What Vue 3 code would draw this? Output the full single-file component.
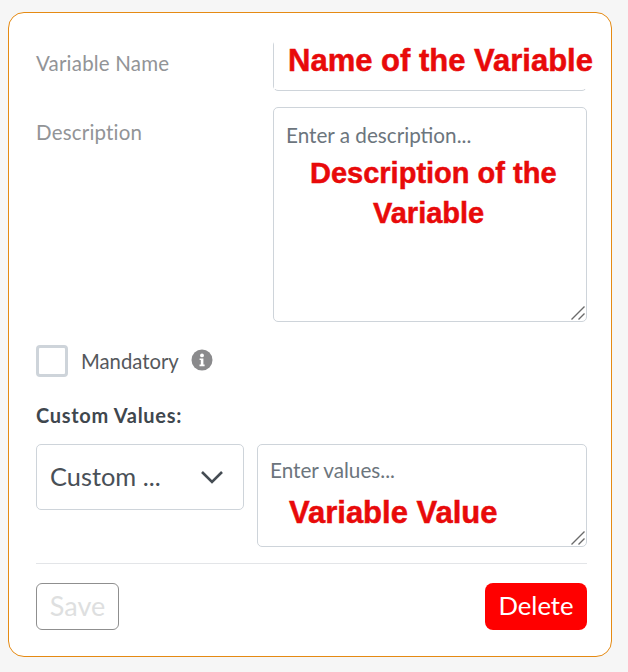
<script setup>
const nameNote = 'Name of the Variable'
const valueNote = 'Variable Value'
</script>

<template>
  <div class="card">
    <div class="row name-row">
      <label class="label name-label">Variable Name</label>
      <div class="field">
        <input class="input" type="text" />
        <div class="mask"></div>
        <div class="note name-note">{{ nameNote }}</div>
      </div>
    </div>

    <div class="row desc-row">
      <label class="label">Description</label>
      <div class="field">
        <textarea class="area desc-area" placeholder="Enter a description..."></textarea>
        <svg class="grip" width="14" height="14" viewBox="0 0 14 14">
          <path d="M0.5 13.5L13.5 0.5M7.5 13.5L13.5 7.5" stroke="#6b6b6b" stroke-width="1.4" fill="none" />
        </svg>
        <div class="note desc-note">
          <div>Description of the</div>
          <div class="desc-second">Variable</div>
        </div>
      </div>
    </div>

    <div class="check-row">
      <span class="checkbox"></span>
      <span class="check-label">Mandatory</span>
      <svg class="info" width="22" height="22" viewBox="0 0 22 22">
        <circle cx="11" cy="11" r="10.5" fill="#8a8a8c" />
        <circle cx="11" cy="6.4" r="1.9" fill="#fff" />
        <path d="M8.6 9.4h3.8v6.2h1.2v1.7H8.5v-1.7h1.3v-4.5H8.6z" fill="#fff" />
      </svg>
    </div>

    <div class="section-title">Custom Values:</div>

    <div class="values-row">
      <div class="select">
        <span>Custom ...</span>
        <svg width="24" height="14" viewBox="0 0 24 14">
          <path d="M2 2l10 10L22 2" fill="none" stroke="#454c53" stroke-width="2.6" />
        </svg>
      </div>
      <div class="field values-field">
        <textarea class="area values-area" placeholder="Enter values..."></textarea>
        <svg class="grip" width="14" height="14" viewBox="0 0 14 14">
          <path d="M0.5 13.5L13.5 0.5M7.5 13.5L13.5 7.5" stroke="#6b6b6b" stroke-width="1.4" fill="none" />
        </svg>
        <div class="note value-note">{{ valueNote }}</div>
      </div>
    </div>

    <div class="footer">
      <button class="btn-save" disabled>Save</button>
      <button class="btn-delete">Delete</button>
    </div>
  </div>
</template>

<style>
html, body {
  background: #f6f6f6;
}
</style>

<style scoped>
.card {
  box-sizing: border-box;
  width: 604px;
  height: 645px;
  margin: 12px 0 0 8px;
  padding: 27px 24px 0 27px;
  background: #fff;
  border: 1px solid #e58a13;
  border-radius: 16px;
  font-family: Lato, "Open Sans", sans-serif;
}

.row {
  display: grid;
  grid-template-columns: 237px 314px;
}

.name-row {
  height: 51px;
  margin-bottom: 16px;
}

.desc-row {
  height: 215px;
  margin-bottom: 23px;
}

.label {
  font-size: 20.5px;
  letter-spacing: 0.2px;
  line-height: 24px;
  color: #929497;
}

.name-label {
  padding-top: 11px;
}

.desc-row .label {
  padding-top: 13px;
}

.field {
  position: relative;
}

.input,
.area {
  box-sizing: border-box;
  display: block;
  width: 100%;
  height: 100%;
  margin: 0;
  padding: 0 12px;
  background: #fff;
  border: 1px solid #ced4da;
  border-radius: 5px;
  outline: none;
  resize: none;
  font-family: inherit;
  font-size: 20.7px;
}

.area {
  line-height: 24px;
}

.desc-area {
  padding-top: 15px;
}

.values-area {
  padding-top: 13px;
}

.area::placeholder {
  color: #6c757d;
  opacity: 1;
}

.mask {
  position: absolute;
  left: 1px;
  right: -3px;
  top: -2px;
  bottom: 2px;
  background: #fff;
}

.grip {
  position: absolute;
  right: 2px;
  bottom: 2px;
}

.note {
  position: absolute;
  font-family: "Liberation Sans", Arial, sans-serif;
  font-weight: 700;
  font-size: 31px;
  line-height: 40px;
  color: #e80a0a;
  -webkit-text-stroke: 0.5px #e80a0a;
  white-space: nowrap;
  pointer-events: none;
}

.name-note {
  left: 15px;
  top: 1px;
}

.desc-note {
  left: 37px;
  top: 46px;
  font-size: 29px;
}

.desc-second {
  padding-left: 63px;
}

.value-note {
  left: 32px;
  top: 49px;
}

.check-row {
  display: flex;
  align-items: center;
  height: 32px;
}

.checkbox {
  box-sizing: border-box;
  width: 32px;
  height: 32px;
  border: 3px solid #ced4da;
  border-radius: 4px;
}

.check-label {
  margin-left: 13px;
  font-size: 20.3px;
  color: #55585c;
}

.info {
  margin-left: 12px;
  margin-top: -3px;
}

.section-title {
  margin-top: 26px;
  font-size: 20px;
  letter-spacing: 0.7px;
  line-height: 24px;
  font-weight: 700;
  color: #3f474e;
}

.values-row {
  display: flex;
  align-items: flex-start;
  gap: 13px;
  margin-top: 17px;
}

.select {
  box-sizing: border-box;
  display: flex;
  align-items: center;
  justify-content: space-between;
  width: 208px;
  height: 66px;
  padding: 0 19px 2px 13px;
  border: 1px solid #ced4da;
  border-radius: 5px;
  font-size: 25.4px;
  color: #495057;
}

.select svg {
  margin-top: 2px;
}

.values-field {
  width: 330px;
  height: 103px;
}

.footer {
  display: flex;
  justify-content: space-between;
  align-items: flex-start;
  margin-top: 16px;
  padding-top: 19px;
  border-top: 1px solid #e3e5e8;
}

.btn-save,
.btn-delete {
  height: 47px;
  padding: 0 0 3px;
  font-family: inherit;
}

.btn-save {
  width: 83px;
  background: #fff;
  border: 1px solid #8f8f8f;
  border-radius: 6px;
  font-size: 27px;
  color: #dedfe0;
}

.btn-delete {
  width: 102px;
  background: #ff0000;
  border: none;
  border-radius: 8px;
  font-size: 25.7px;
  color: #fff;
}
</style>
